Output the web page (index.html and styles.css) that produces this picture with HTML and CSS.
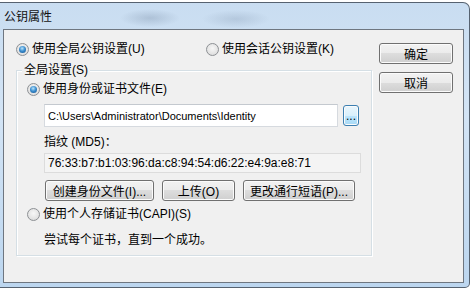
FILE: index.html
```html
<!DOCTYPE html>
<html lang="zh-CN">
<head>
    <meta charset="UTF-8">
    <title>公钥属性</title>
    <link rel="stylesheet" href="styles.css">
</head>
<body>
    <div class="window">
        <div class="titlebar">公钥属性</div>
        <div class="client">
            <div class="main">
                <!-- Choix du mode -->
                <div class="mode-row">
                    <div class="radio-line"><span class="radio checked"></span>使用全局公钥设置(U)</div>
                    <div class="radio-line"><span class="radio"></span>使用会话公钥设置(K)</div>
                </div>

                <fieldset class="group">
                    <legend>全局设置(S)</legend>
                    <div class="radio-line"><span class="radio checked"></span>使用身份或证书文件(E)</div>
                    <div class="path-row">
                        <div class="textbox path">C:\Users\Administrator\Documents\Identity</div>
                        <button class="btn browse hot">...</button>
                    </div>
                    <div class="indent fp-label">指纹 (MD5)：</div>
                    <div class="textbox readonly">76:33:b7:b1:03:96:da:c8:94:54:d6:22:e4:9a:e8:71</div>
                    <div class="btn-row">
                        <button class="btn create">创建身份文件(I)...</button>
                        <button class="btn upload">上传(O)</button>
                        <button class="btn passphrase">更改通行短语(P)...</button>
                    </div>
                    <div class="radio-line capi"><span class="radio"></span>使用个人存储证书(CAPI)(S)</div>
                    <div class="indent hint">尝试每个证书，直到一个成功。</div>
                </fieldset>
            </div>

            <div class="side">
                <button class="btn">确定</button>
                <button class="btn">取消</button>
            </div>
        </div>
    </div>
</body>
</html>
```

FILE: styles.css
```css
* {
    margin: 0;
    padding: 0;
    box-sizing: border-box;
}

body {
    font-family: "Liberation Sans", "Noto Sans CJK SC", sans-serif;
    font-size: 12px;
    color: #000;
    background-color: #fff;
    overflow: hidden;
}

.window {
    margin-top: 2px;
    width: 470px;
    height: 286px;
    border: 1px solid #566270;
    border-left: none;
    border-radius: 0 7px 5px 0;
    padding: 0 5px 4px 3px;
    display: flex;
    flex-direction: column;
    background:
        radial-gradient(ellipse 30px 9px at 150px 15px, rgba(120, 140, 165, 0.35), transparent),
        radial-gradient(ellipse 34px 9px at 236px 16px, rgba(130, 150, 175, 0.3), transparent),
        linear-gradient(180deg, #c9ddf1 0%, #d3e4f5 40%, #bcd6ef 100%);
}

.titlebar {
    height: 26px;
    line-height: 26px;
    padding-left: 1px;
    color: #111;
    font-family: "Noto Sans CJK SC", sans-serif;
}

.client {
    flex: 1;
    display: flex;
    background-color: #f0f0f0;
    border: 1px solid #6e7680;
    padding: 12px 10px 0 12px;
}

.main {
    width: 354px;
}

.side {
    margin-left: 9px;
    margin-top: 1px;
    width: 74px;
    display: flex;
    flex-direction: column;
    gap: 8px;
}

.mode-row {
    display: grid;
    grid-template-columns: 190px auto;
}

.radio-line {
    display: flex;
    align-items: center;
    height: 14px;
    line-height: 14px;
    white-space: nowrap;
}

.radio {
    width: 13px;
    height: 13px;
    margin-right: 3px;
    border-radius: 50%;
    border: 1px solid #8d9094;
    background: radial-gradient(circle at 50% 40%, #f7f7f7 0%, #e4e4e4 60%, #d4d4d4 100%);
    display: flex;
    align-items: center;
    justify-content: center;
    flex-shrink: 0;
}

.radio.checked::after {
    content: "";
    width: 7px;
    height: 7px;
    border-radius: 50%;
    background: radial-gradient(circle at 45% 35%, #b9e4fb 0%, #3d8fd0 45%, #0d4f8c 100%);
}

.group {
    margin-top: 7px;
    width: 354px;
    border: 1px solid #d5dfe5;
    box-shadow: inset 1px 1px 0 #fff, 1px 1px 0 #fff;
    padding: 5px 10px 8px 10px;
}

.group legend {
    margin-left: -5px;
    padding: 0 2px;
    line-height: 14px;
    background-color: #f0f0f0;
}

.indent {
    margin-left: 17px;
}

.path-row {
    margin-top: 8px;
    margin-left: 17px;
    display: flex;
    align-items: center;
    gap: 5px;
}

.textbox {
    display: flex;
    align-items: center;
    padding-left: 3px;
    white-space: nowrap;
    border: 1px solid #d6dadf;
    border-top-color: #c4c9cf;
}

.textbox.path {
    width: 294px;
    height: 23px;
    background-color: #fff;
    font-size: 11px;
}

.textbox.readonly {
    margin-top: 4px;
    margin-left: 17px;
    width: 317px;
    height: 20px;
    background-color: #f4f4f4;
    border-color: #dcdcdc;
    font-size: 12px;
}

.fp-label {
    margin-top: 8px;
    line-height: 14px;
}

.btn {
    height: 21px;
    font-family: inherit;
    font-size: 12px;
    color: #000;
    border: 1px solid #707070;
    border-radius: 3px;
    background: linear-gradient(180deg, #f2f2f2 0%, #ebebeb 50%, #dddddd 50%, #cfcfcf 100%);
    box-shadow: inset 0 0 0 1px #fbfbfb;
    white-space: nowrap;
}

.btn.hot {
    border-color: #3c7fb1;
    background: linear-gradient(180deg, #eaf6fd 0%, #d9f0fc 50%, #bee6fd 50%, #a7d9f5 100%);
}

.btn.browse {
    width: 16px;
    padding: 0;
    line-height: 12px;
}

.btn-row {
    margin-top: 7px;
    margin-left: 18px;
    display: flex;
    gap: 8px;
}

.btn.create {
    width: 109px;
}

.btn.upload {
    width: 73px;
}

.btn.passphrase {
    width: 112px;
}

.capi {
    margin-top: 6px;
}

.hint {
    margin-top: 12px;
    line-height: 14px;
}
```
